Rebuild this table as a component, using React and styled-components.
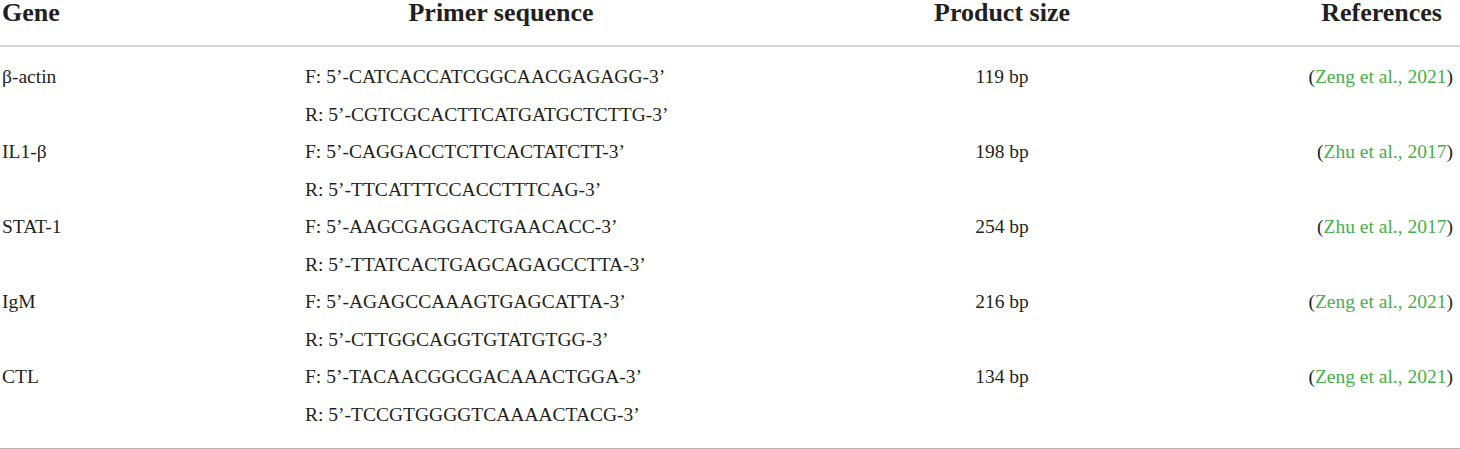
import React from "react";
import styled, { createGlobalStyle } from "styled-components";

const rows = [
  {
    gene: "β-actin",
    forward: "CATCACCATCGGCAACGAGAGG",
    reverse: "CGTCGCACTTCATGATGCTCTTG",
    size: "119 bp",
    ref: "Zeng et al., 2021",
  },
  {
    gene: "IL1-β",
    forward: "CAGGACCTCTTCACTATCTT",
    reverse: "TTCATTTCCACCTTTCAG",
    size: "198 bp",
    ref: "Zhu et al., 2017",
  },
  {
    gene: "STAT-1",
    forward: "AAGCGAGGACTGAACACC",
    reverse: "TTATCACTGAGCAGAGCCTTA",
    size: "254 bp",
    ref: "Zhu et al., 2017",
  },
  {
    gene: "IgM",
    forward: "AGAGCCAAAGTGAGCATTA",
    reverse: "CTTGGCAGGTGTATGTGG",
    size: "216 bp",
    ref: "Zeng et al., 2021",
  },
  {
    gene: "CTL",
    forward: "TACAACGGCGACAAACTGGA",
    reverse: "TCCGTGGGGTCAAAACTACG",
    size: "134 bp",
    ref: "Zeng et al., 2021",
  },
];

function App() {
  return (
    <>
      <GlobalStyle />
      <Table>
        <HeadRow>
          <HeadCell>Gene</HeadCell>
          <HeadCell $align="center">Primer sequence</HeadCell>
          <HeadCell $align="center">Product size</HeadCell>
          <HeadCell $align="right" $padRight="11px">
            References
          </HeadCell>
        </HeadRow>

        <Body>
          {rows.map((r) => (
            <Row key={r.gene}>
              <Cell>{r.gene}</Cell>
              <Cell>
                <Line>F: 5’-{r.forward}-3’</Line>
                <Line>R: 5’-{r.reverse}-3’</Line>
              </Cell>
              <Cell $align="center">{r.size}</Cell>
              <Cell $align="right">
                (<RefLink>{r.ref}</RefLink>)
              </Cell>
            </Row>
          ))}
        </Body>
      </Table>
    </>
  );
}

export default App;

const GlobalStyle = createGlobalStyle`
  html, body {
    margin: 0;
    padding: 0;
    background: #ffffff;
  }
  body {
    font-family: "Liberation Serif", "Times New Roman", serif;
    color: #231f20;
  }
`;

const columns = "303px 392px 610px 1fr";

const Table = styled.div`
  width: 1460px;
`;

const HeadRow = styled.div`
  display: grid;
  grid-template-columns: ${columns};
  height: 45px;
  padding: 0 7px 0 2px;
  border-bottom: 2px solid #d6d6d6;
`;

const HeadCell = styled.div`
  font-size: 26px;
  font-weight: bold;
  line-height: 26px;
  text-align: ${(p) => p.$align || "left"};
  padding-right: ${(p) => p.$padRight || "0"};
  white-space: nowrap;
`;

const Body = styled.div`
  padding: 11px 7px 15px 2px;
  border-bottom: 2px solid #b4b4b4;
`;

const Row = styled.div`
  display: grid;
  grid-template-columns: ${columns};
  font-size: 19.5px;
  line-height: 37.5px;
`;

const Cell = styled.div`
  text-align: ${(p) => p.$align || "left"};
  white-space: nowrap;
`;

const Line = styled.div`
  height: 37.5px;
`;

const RefLink = styled.span`
  color: #45b04b;
`;
